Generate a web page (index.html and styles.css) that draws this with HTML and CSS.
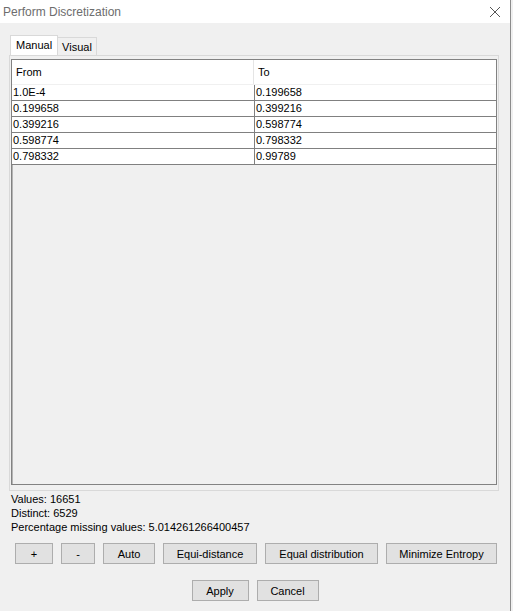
FILE: index.html
```html
<!DOCTYPE html>
<html lang="en">
<head>
  <meta charset="UTF-8" />
  <title>Perform Discretization</title>
  <link rel="stylesheet" href="styles.css">
</head>
<body>

  <div class="window">
    <div class="titlebar">
      <span class="title">Perform Discretization</span>
      <span class="close">
        <svg width="12" height="12" viewBox="0 0 12 12">
          <path d="M1 1 L11 11 M11 1 L1 11" stroke="#555" stroke-width="1" fill="none" />
        </svg>
      </span>
    </div>

    <div class="content">
      <div class="tabs">
        <div class="tab active">Manual</div>
        <div class="tab">Visual</div>
      </div>

      <div class="tab-pane">
        <div class="table-pane">
          <div class="table-head">
            <div class="head-cell">From</div>
            <div class="head-cell">To</div>
          </div>
          <div id="rows"></div>
        </div>
      </div>

      <div class="stats">
        <div>Values: 16651</div>
        <div>Distinct: 6529</div>
        <div>Percentage missing values: 5.014261266400457</div>
      </div>

      <div class="button-row">
        <button class="btn btn-plus">+</button>
        <button class="btn btn-minus">-</button>
        <button class="btn btn-auto">Auto</button>
        <button class="btn btn-equi">Equi-distance</button>
        <button class="btn btn-equal">Equal distribution</button>
        <button class="btn btn-entropy">Minimize Entropy</button>
      </div>

      <div class="footer">
        <button class="btn btn-apply">Apply</button>
        <button class="btn btn-cancel">Cancel</button>
      </div>
    </div>
  </div>

  <script>
    const intervals = [
      ["1.0E-4", "0.199658"],
      ["0.199658", "0.399216"],
      ["0.399216", "0.598774"],
      ["0.598774", "0.798332"],
      ["0.798332", "0.99789"]
    ];

    const rows = document.getElementById("rows");
    intervals.forEach(pair => {
      const row = document.createElement("div");
      row.className = "row";
      pair.forEach(value => {
        const cell = document.createElement("div");
        cell.className = "cell";
        cell.textContent = value;
        row.appendChild(cell);
      });
      rows.appendChild(row);
    });
  </script>

</body>
</html>
```

FILE: styles.css
```css
body {
  margin: 0;
  background: #f0f0f0;
  font-family: 'Liberation Sans', Arial, sans-serif;
  font-size: 12px;
  color: #000;
}

.window {
  width: 510px;
  height: 611px;
  border-right: 1px solid #8c8c8c;
  overflow: hidden;
}

.titlebar {
  height: 23px;
  background: #fff;
  display: flex;
  align-items: center;
  justify-content: space-between;
}

.title {
  padding-left: 3px;
  color: #6d6d6d;
  font-size: 12px;
}

.close {
  display: flex;
  margin-right: 9px;
}

.content {
  padding: 12px 0 0 9px;
}

.tabs {
  display: flex;
  align-items: flex-end;
  height: 20px;
  padding-left: 1px;
}

.tab {
  height: 17px;
  padding: 0 4px;
  border: 1px solid #d9d9d9;
  border-bottom: none;
  font-size: 11px;
  line-height: 18px;
}

.tab.active {
  height: 19px;
  padding: 0 5px;
  background: #fff;
  line-height: 18px;
  margin-right: -1px;
}

.tab-pane {
  width: 486px;
  height: 429px;
  border: 1px solid #d9d9d9;
  padding: 3px 1px 2px 1px;
}

.table-pane {
  height: 426px;
  border: 1px solid #828282;
  box-shadow: inset 1px 1px 0 #b4b4b4;
  box-sizing: border-box;
}

.table-head {
  display: flex;
  height: 24px;
  background: #fff;
  border-bottom: 1px solid #f0f0f0;
}

.head-cell {
  padding-left: 4px;
  line-height: 25px;
  font-size: 11px;
}

.head-cell:first-child {
  width: 237px;
  border-right: 1px solid #e5e5e5;
}

.row {
  display: flex;
  height: 15px;
  background: #fff;
  border-bottom: 1px solid #808080;
}

.cell {
  font-size: 11px;
  line-height: 15px;
  padding-left: 1px;
}

.cell:first-child {
  width: 241px;
  border-right: 1px solid #808080;
}

.stats {
  margin-top: 1px;
  padding-left: 2px;
  line-height: 14px;
  font-size: 11px;
}

.button-row {
  display: flex;
  gap: 8px;
  margin-top: 9px;
  padding-left: 6px;
}

.btn {
  height: 21px;
  padding: 0;
  background: #e1e1e1;
  border: 1px solid #adadad;
  font-family: 'Liberation Sans', Arial, sans-serif;
  font-size: 11px;
  color: #000;
}

.btn-plus { width: 38px; }
.btn-minus { width: 34px; }
.btn-auto { width: 52px; }
.btn-equi { width: 94px; }
.btn-equal { width: 113px; }
.btn-entropy { width: 111px; }
.btn-apply { width: 57px; }
.btn-cancel { width: 62px; }

.footer {
  display: flex;
  justify-content: center;
  gap: 8px;
  margin-top: 16px;
  padding-right: 9px;
}
```
